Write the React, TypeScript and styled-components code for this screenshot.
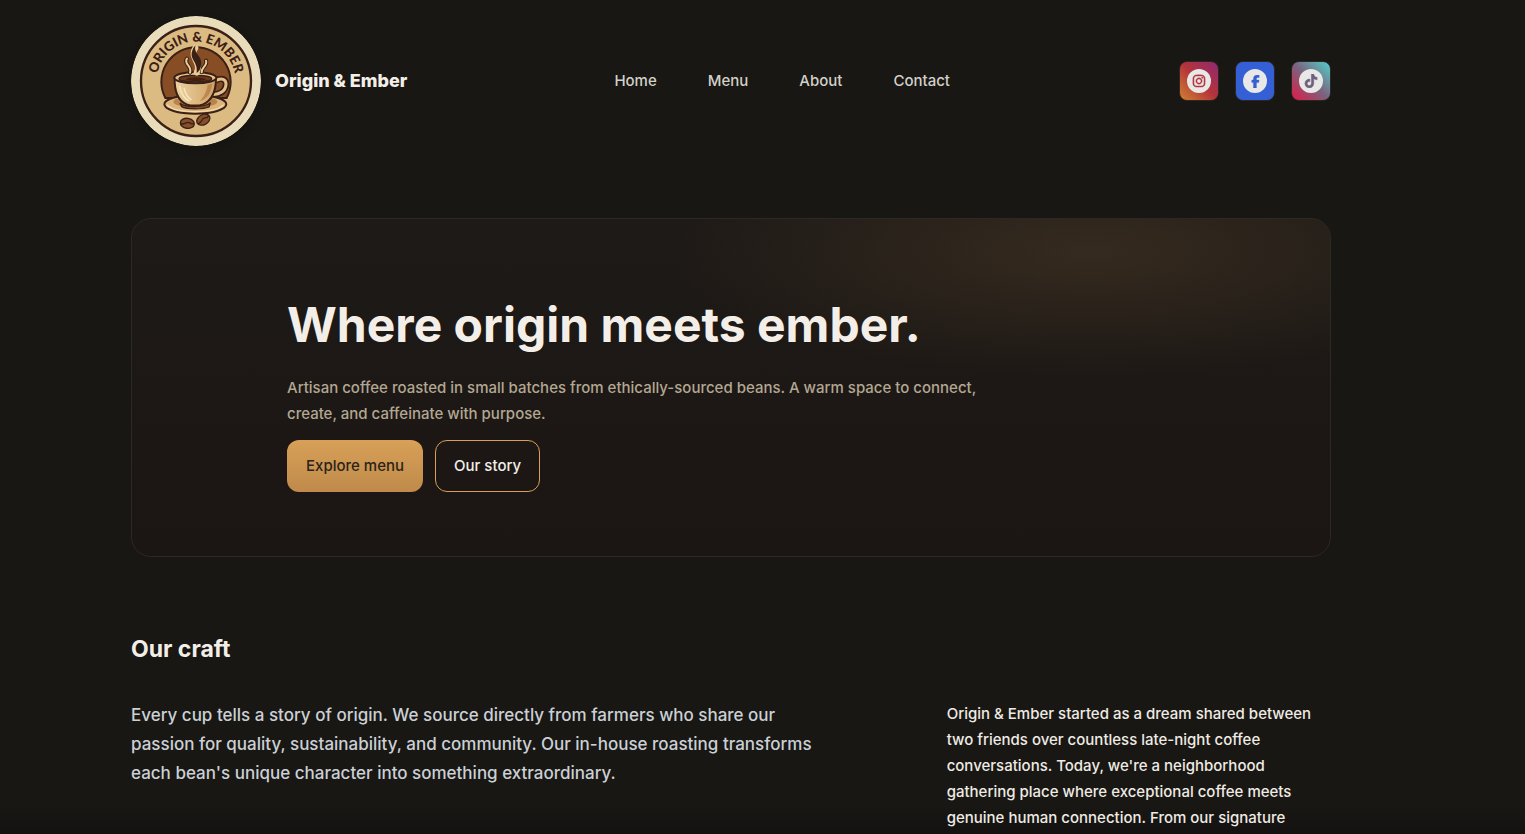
import React from "react";
import styled, { createGlobalStyle } from "styled-components";
import { FaFacebookF, FaInstagram, FaTiktok } from "react-icons/fa6";

const GlobalStyle = createGlobalStyle`
  *, *::before, *::after { box-sizing: border-box; }
  html { background: #181713; }
  body {
    margin: 0;
    color: #efebe4;
    font: 500 15px/26px Inter, sans-serif;
  }
  h1, h2, p, ul { margin: 0; padding: 0; }
  ul { list-style: none; }
  a { color: inherit; text-decoration: none; }
`;

const Page = styled.div`
  height: 100vh;
  overflow: hidden;
  padding-right: 63px;
  background: linear-gradient(transparent calc(100% - 28px), #141211);
`;

const Container = styled.div`
  max-width: 1200px;
  margin: 0 auto;
`;

const Header = styled.header`
  display: grid;
  grid-template-columns: auto 1fr auto;
  align-items: center;
  padding: 16px 0;
`;

const Brand = styled.a`
  display: flex;
  align-items: center;
  gap: 14px;
  color: #f3efe8;
  font-size: 18px;
  font-weight: 800;
`;

const LogoMark = styled.svg`
  width: 130px;
  height: 130px;
  border-radius: 50%;
  box-shadow: 0 2px 8px rgba(0, 0, 0, 0.2);
`;

const Nav = styled.nav`
  display: flex;
  justify-content: center;
  gap: 51px;
  padding-right: 22px;
`;

const NavLink = styled.a`
  color: #d3d0ca;
`;

const Social = styled.ul`
  display: flex;
  gap: 16px;
`;

const SocialLink = styled.a<{ $fill: string; $ink: string }>`
  display: grid;
  place-items: center;
  width: 40px;
  height: 40px;
  border: 1px solid #2b2622;
  border-radius: 8px;
  background: ${(p) => p.$fill};
  background-origin: border-box;
  color: ${(p) => p.$ink};
`;

const SocialDisc = styled.span`
  display: grid;
  place-items: center;
  width: 24px;
  height: 24px;
  border-radius: 50%;
  background: #e8e8e6;
`;

const Hero = styled.section`
  margin-top: 56px;
  padding: 72px 64px 64px;
  border: 1px solid #2e2822;
  border-radius: 20px;
  background:
    radial-gradient(420px 125px at 80% 10%, rgba(212, 154, 85, 0.13), transparent),
    linear-gradient(#1e1a17, #1b1613);
`;

const HeroBody = styled.div`
  max-width: 888px;
  margin: 0 auto;
`;

const HeroTitle = styled.h1`
  color: #f3efe8;
  font-size: 48px;
  line-height: 68px;
  font-weight: 700;
`;

const HeroLead = styled.p`
  max-width: 720px;
  margin: 16px 0 13px;
  color: #b3a792;
`;

const Actions = styled.div`
  display: flex;
  gap: 12px;
`;

const Button = styled.button<{ $primary?: boolean }>`
  height: 52px;
  padding: 0 18px;
  border: 1px solid ${(p) => (p.$primary ? "transparent" : "#d8a056")};
  border-radius: 12px;
  background: ${(p) => (p.$primary ? "linear-gradient(#d8a058, #bf8a4a) border-box" : "transparent")};
  color: ${(p) => (p.$primary ? "#2a231a" : "#f3efe8")};
  font: inherit;
`;

const Craft = styled.section`
  padding-top: 72px;
`;

const CraftTitle = styled.h2`
  color: #f3efe8;
  font-size: 23px;
  line-height: 40px;
  font-weight: 700;
`;

const Columns = styled.div`
  display: grid;
  grid-template-columns: 2fr 1fr;
  gap: 32px;
  margin-top: 32px;
`;

const Lead = styled.p`
  max-width: 700px;
  color: #cbd0d6;
  font-size: 17px;
  line-height: 29px;
`;

const Story = styled.p`
  padding-left: 5px;
`;

function Bean({ x, y, angle }: { x: number; y: number; angle: number }) {
  return (
    <g transform={`translate(${x} ${y}) rotate(${angle})`} stroke="#3a2016" strokeWidth="4">
      <ellipse rx="21" ry="15" fill="#874f29" />
      <path d="M-20 3C-9 9-3-7 6-3s8 4 14-1" fill="none" />
    </g>
  );
}

function Logo() {
  return (
    <LogoMark viewBox="18 18 390 390" role="img" aria-label="Origin & Ember logo">
      <defs>
        <path id="brand-arc" d="M95 213a118 118 0 0 1 236 0" />
        <linearGradient id="brand-cup" x1="0" x2="1">
          <stop offset="0" stopColor="#ecd2a0" />
          <stop offset="1" stopColor="#d0a267" />
        </linearGradient>
      </defs>
      <circle cx="213" cy="213" r="195" fill="#e9dcba" />
      <circle cx="213" cy="213" r="165" fill="#dcbb83" stroke="#3a2016" strokeWidth="7" />
      <path d="M121 264A104 104 0 1 1 305 264z" fill="#874d25" stroke="#3a2016" strokeWidth="6" />
      <text fill="#3a2016" fontFamily="Lato, sans-serif" fontSize="40" fontWeight="900" textAnchor="middle">
        <textPath href="#brand-arc" startOffset="50%">ORIGIN &amp; EMBER</textPath>
      </text>
      <ellipse cx="211" cy="283" rx="93" ry="28" fill="#dcb47a" stroke="#3a2016" strokeWidth="6" />
      <path d="M126 284c12 14 42 21 84 21s73-7 86-21" fill="none" stroke="#f0dcb2" strokeWidth="4" />
      <ellipse cx="211" cy="275" rx="66" ry="17" fill="#b9844c" />
      <path d="M165 279c12 14 78 14 91-1l-4 13c-16 7-67 8-82-1z" fill="#874d25" stroke="#3a2016" strokeWidth="4" />
      <path d="M272 212c18-11 32-4 31 11-1 20-19 32-41 30" fill="none" stroke="#3a2016" strokeWidth="19" />
      <path d="M270 213c20-12 34-5 33 10-1 20-19 32-43 30" fill="none" stroke="#e2c089" strokeWidth="9" />
      <path d="M149 203c-1 36 8 68 36 80 14 5 36 5 49 0 28-12 39-44 39-80z" fill="url(#brand-cup)" stroke="#3a2016" strokeWidth="6" />
      <path d="M164 228c4 24 14 38 29 46M177 234c4 17 12 29 22 36" fill="none" stroke="#f6e3bb" strokeWidth="5" />
      <path d="M262 221c-4 28-16 46-38 53 12-13 21-28 24-50z" fill="#bd8850" />
      <ellipse cx="211" cy="203" rx="63" ry="17" fill="#e5c48e" stroke="#3a2016" strokeWidth="6" />
      <ellipse cx="211" cy="206" rx="49" ry="10" fill="#6b381c" stroke="#3a2016" strokeWidth="4" />
      <path d="M181 208c17-8 46-8 64 0-17 8-46 8-64 0z" fill="#43200f" />
      <g fill="none" strokeLinecap="round">
        <path d="M186 146c-12 16 17 22 9 42M243 152c6 15-15 20-13 35" stroke="#3a2016" strokeWidth="12" />
        <path d="M186 146c-12 16 17 22 9 42M243 152c6 15-15 20-13 35" stroke="#e9cc96" strokeWidth="6" />
        <path d="M211 114c-20 27 20 42 4 74" stroke="#e9cc96" strokeWidth="18" />
      </g>
      <path d="M212 106c-10 25 26 34 15 66-2 9-7 13-12 17 5-36-23-40-13-67 2-7 6-12 10-16z" fill="#3a2016" />
      <Bean x={187} y={340} angle={8} />
      <Bean x={235} y={329} angle={-28} />
    </LogoMark>
  );
}

const links = ["Home", "Menu", "About", "Contact"];

const socials = [
  {
    name: "Instagram",
    fill: "linear-gradient(45deg, #cf8530, #b5343a 50%, #8c2874)",
    ink: "#b5343f",
    size: 14,
    weight: 16,
    Icon: FaInstagram,
  },
  { name: "Facebook", fill: "#3560d5", ink: "#3560d5", size: 13, weight: 16, Icon: FaFacebookF },
  {
    name: "TikTok",
    fill: "linear-gradient(45deg, #d02650 10%, #7b637f 50%, #50d5cf)",
    ink: "#70607f",
    size: 14,
    weight: 16,
    Icon: FaTiktok,
  },
];

export default function App() {
  return (
    <Page>
      <GlobalStyle />
      <Container>
        <Header>
          <Brand href="#home">
            <Logo />
            <span>Origin &amp; Ember</span>
          </Brand>
          <Nav aria-label="Main">
            {links.map((label) => (
              <NavLink key={label} href={`#${label.toLowerCase()}`}>
                {label}
              </NavLink>
            ))}
          </Nav>
          <Social>
            {socials.map(({ name, fill, ink, size, weight, Icon }) => (
              <li key={name}>
                <SocialLink href={`#${name.toLowerCase()}`} aria-label={name} $fill={fill} $ink={ink}>
                  <SocialDisc>
                    <Icon size={size} strokeWidth={weight} />
                  </SocialDisc>
                </SocialLink>
              </li>
            ))}
          </Social>
        </Header>
        <main>
          <Hero>
            <HeroBody>
              <HeroTitle>Where origin meets ember.</HeroTitle>
              <HeroLead>
                Artisan coffee roasted in small batches from ethically-sourced beans. A warm space to connect, create,
                and caffeinate with purpose.
              </HeroLead>
              <Actions>
                <Button type="button" $primary>
                  Explore menu
                </Button>
                <Button type="button">Our story</Button>
              </Actions>
            </HeroBody>
          </Hero>
          <Craft>
            <CraftTitle>Our craft</CraftTitle>
            <Columns>
              <Lead>
                Every cup tells a story of origin. We source directly from farmers who share our passion for quality,
                sustainability, and community. Our in-house roasting transforms each bean's unique character into
                something extraordinary.
              </Lead>
              <Story>
                Origin &amp; Ember started as a dream shared between two friends over countless late-night coffee
                conversations. Today, we're a neighborhood gathering place where exceptional coffee meets genuine human
                connection. From our signature
              </Story>
            </Columns>
          </Craft>
        </main>
      </Container>
    </Page>
  );
}
